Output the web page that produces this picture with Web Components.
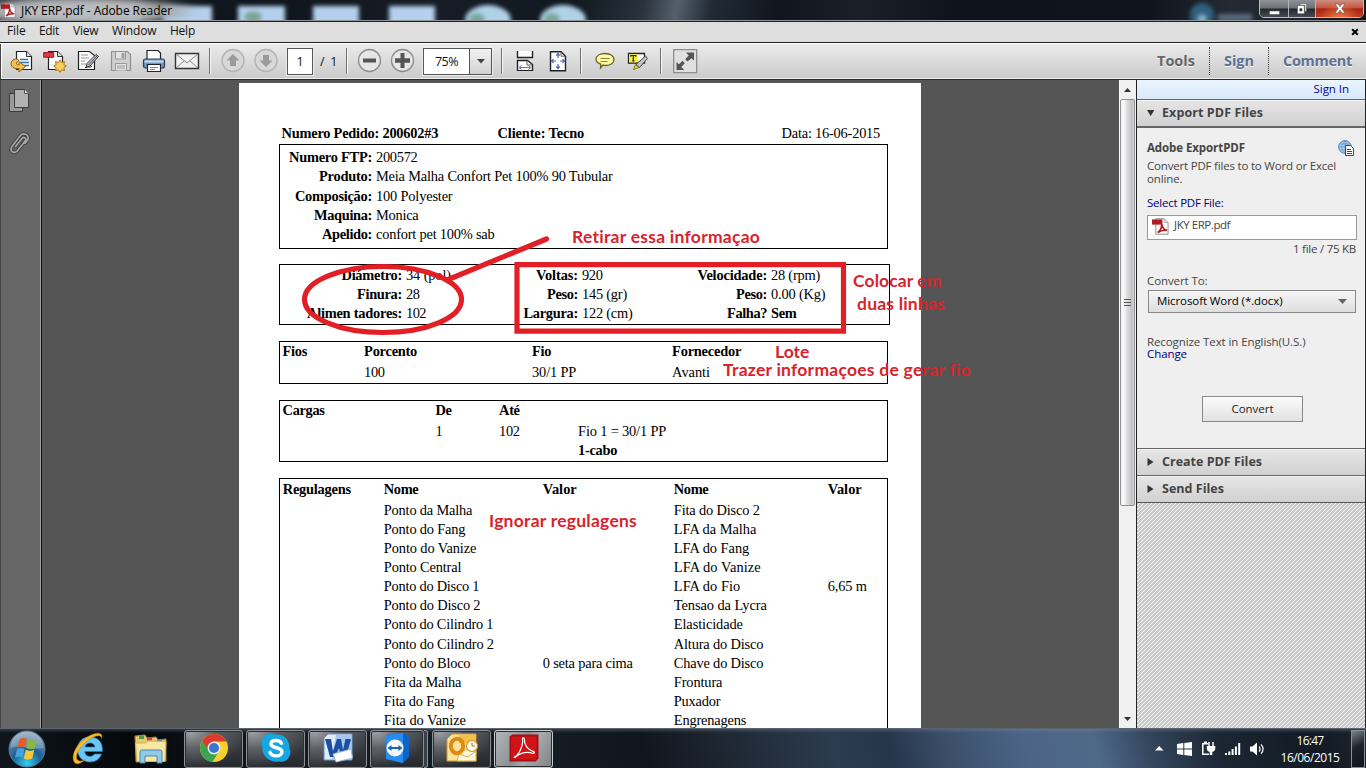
<!DOCTYPE html>
<html lang="en">
<head>
<meta charset="utf-8">
<title>JKY ERP.pdf - Adobe Reader</title>
<style>
html,body{margin:0;padding:0;width:1366px;height:768px;overflow:hidden;background:#555}
</style>
</head>
<body>
<reader-app></reader-app>
<script>
const define = (name, css, html, setup) => customElements.define(name, class extends HTMLElement {
  constructor() {
    super();
    const root = this.attachShadow({mode: 'open'});
    root.innerHTML = `<style>*{box-sizing:border-box}${css}</style>${typeof html === 'function' ? html(this) : html}`;
  }
  connectedCallback() { if (setup) setup(this); }
});

const pdfMark = (w, h) => `<svg width="${w}" height="${h}" viewBox="0 0 18 18">
<path d="M4 .8h9l4 4v12.4H4z" fill="#fdfdfd" stroke="#8a8a8a"/><path d="M13 .8v4h4" fill="#ddd" stroke="#999" stroke-width=".7"/>
<path d="M0 1.500h11v5.500H0z" fill="#b01c20"/><path d="M6 15.500c3-2 4.200-5 4.300-9 .8 4.500 2.800 6.200 5.700 6.600-4-.6-7 .4-10 2.400z" fill="none" stroke="#b01c20" stroke-width="1.700"/></svg>`;

/* ---------- window frame ---------- */
define('title-bar', `
:host{display:flex;height:21px;position:relative;overflow:hidden;font:12px "Open Sans",sans-serif;color:#000;
 background:linear-gradient(100deg,#10161d 0 20%,#161d26 32%,#101820 42%,#2a323b 47%,#54606d 49.5%,#222b36 52%,#10161d 57%,#1b2028 63%,#0e141b 70%,#0f151c 84%,#252b33 90%,#12181f 100%)}
svg.bg{position:absolute;inset:0}
.t{position:relative;display:flex;align-items:center;height:21px;padding-left:1px;gap:5px}
.t svg{flex:none}
.b{position:absolute;right:2px;top:-1px;height:19px;display:flex;border:1px solid #b9bec4;border-radius:0 0 5px 5px;overflow:hidden;background:#333}
.b div{display:flex;align-items:center;justify-content:center;background:linear-gradient(#8e9298,#6b7077 48%,#24292f 52%,#474c53)}
.b div+div{border-left:1px solid #b0b5ba}
.b .c{background:radial-gradient(ellipse at 50% 110%,#ee7a45,transparent 60%),linear-gradient(#d08d82,#c2553f 46%,#a52613 52%,#c23a1c)}
`, `<svg class="bg" width="1366" height="21"><defs><filter id="f" x="-30%" y="-80%" width="160%" height="260%"><feGaussianBlur stdDeviation="2.200"/></filter><filter id="g" x="-30%" y="-100%" width="160%" height="300%"><feGaussianBlur stdDeviation="9 5"/></filter></defs>
<g filter="url(#f)"><path d="M91 5h50v22H91z" fill="#7791ad"/><path d="M163 6h49v24h-49zM238 6h47v24h-47zM313 6h46v24h-46zM389 6h46v24h-46z" fill="#b4d0ee"/>
<ellipse cx="488" cy="20" rx="23" ry="15" fill="#b0d2e8"/><ellipse cx="563" cy="20" rx="23" ry="15" fill="#b0d2e8"/><ellipse cx="477" cy="19" rx="8" ry="6" fill="#75a997"/><ellipse cx="552" cy="19" rx="8" ry="6" fill="#75a997"/><ellipse cx="253" cy="17" rx="9" ry="6" fill="#78a68f"/>
<circle cx="1202" cy="15" r="12" fill="#2f617f"/><circle cx="1202" cy="19" r="4" fill="#85b8d5"/><path d="M1218 14h34v7h-34z" fill="#5b6b80"/></g>
<ellipse cx="85" cy="11" rx="103" ry="12" fill="#a3a7aa" filter="url(#g)"/><ellipse cx="75" cy="12" rx="85" ry="14" fill="#c4c6c7" opacity=".7" filter="url(#g)"/><path d="M0 20.500h1366" stroke="#8e9398"/></svg>
<div class="t">${pdfMark(15,17)}<t-x w="151">JKY ERP.pdf - Adobe Reader</t-x></div>
<div class="b"><div style="width:28px"><svg width="11" height="14"><path d="M.5 9h10v3.500H.5z" fill="#fff" stroke="#555" stroke-width=".6"/></svg></div><div style="width:27px"><svg width="12" height="13"><path d="M4 1.500h6.500v8H9V3H4z" fill="#fff" stroke="#444" stroke-width=".5"/><path d="M1.500 3.500h6.800v8.200H1.500zm2.300 3v2.600H6V6.500z" fill="#fff" fill-rule="evenodd" stroke="#444" stroke-width=".5"/></svg></div><div class="c" style="width:48px"><svg width="12" height="11"><path d="M1 1h3l2 2.700L8 1h3L7.700 5.400 11 10H8L6 7.200 4 10H1l3.300-4.600z" fill="#fff" stroke="#555" stroke-width=".6"/></svg></div></div>`);

define('menu-bar', `
:host{display:flex;height:21px;align-items:center;background:#dedede;border-top:1px solid #1d2126;padding-left:7px;font:12px "Open Sans",sans-serif;color:#111}
div{flex:none;line-height:18px;padding-bottom:2px}
svg{margin-left:auto;margin-right:7px}`,
`<div style="width:32px"><t-x w="18.500">File</t-x></div><div style="width:34px"><t-x w="20">Edit</t-x></div><div style="width:39px"><t-x w="25.500">View</t-x></div><div style="width:58px"><t-x w="44.500">Window</t-x></div><div><t-x w="25">Help</t-x></div>
<svg width="8" height="8"><path d="M1.200 1.200l5.600 5.600M6.800 1.200L1.200 6.800" stroke="#000" stroke-width="2"/></svg>`);

/* ---------- toolbar ---------- */
define('tool-cell', `:host{display:flex;flex:none;width:33px;height:33px;align-items:center;justify-content:center}`, `<slot></slot>`);
define('tool-sep', `:host{display:flex;flex:none;width:13px;justify-content:center}i{height:26px;width:2px;background:#707070;border-right:1px solid #f6f6f6}`, `<i></i>`);
define('tool-bar', `
:host{display:flex;height:38px;align-items:center;border-top:1px solid #222;border-bottom:1px solid #2b2b2b;box-shadow:inset 0 1px #fff,inset 1px 0 #444,inset 2px 0 #fff,inset 0 -1px #eee;
 background:linear-gradient(#ececec,#cacaca);padding-left:5px;font:12.500px "Open Sans",sans-serif;color:#111}
.page{flex:none;margin-left:5px;width:26px;height:27px;border:1px solid #555;background:#fff;box-shadow:0 0 0 1px #eee;text-align:center;line-height:25px}
.of{flex:none;width:20px;margin-left:7px;line-height:25px}
.zoom{flex:none;margin:0 3px 0 4px;width:69px;height:27px;border:1px solid #555;background:#fff;display:flex;box-shadow:0 0 0 1px #eee}
.zoom div:first-child{width:45px;padding-left:11px;line-height:25px}
.zoom div:last-child{flex:1;border-left:1px solid #555;background:linear-gradient(#f2f2f2,#d2d2d2);display:flex;align-items:center;justify-content:center}
.full{flex:none;margin-left:5px}
.tabs{margin-left:auto;display:flex;align-items:center;height:28px;font:bold 14.500px "Open Sans",sans-serif;color:#5b7294;text-shadow:0 1px #f4f4f4}
.tabs div{height:28px;line-height:27px;padding-left:14px}
.tabs div+div{border-left:1px dotted #333}`,
`<tool-cell><svg width="24" height="24" viewBox="0 0 24 24"><path d="M6.500 2.500h10l5 5v13h-15z" fill="#fff" stroke="#222" stroke-width="1.200"/><path d="M16.500 2.500v5h5" fill="#ddd" stroke="#333"/><path d="M10 10.500h8M9 13.500h10M12 16.500h7" stroke="#2d6fb0" stroke-width="1.500"/><path d="M7.500 10C2.500 9.500-.3 13.500 1.700 17c1.500 2.500 4 2.800 7.300 2.600V23l6.500-5.500L9 12.800v2.900C5.500 16 5.500 13 9 12z" fill="#f3c04e" stroke="#8a6414"/></svg></tool-cell>
<tool-cell><svg width="24" height="24" viewBox="0 0 24 24"><path d="M5.500 2.500h9l5 5v13h-14z" fill="#fafafa" stroke="#222" stroke-width="1.200"/><path d="M14.500 2.500v5h5" fill="#ddd" stroke="#333"/><path d="M.7 3.500h10v4.800H.7z" fill="#db3a45" stroke="#a01824"/><path d="M17 11l1.600 2.500 2.900-.8-.7 2.900 2.600 1.500-2.600 1.600.7 2.900-2.900-.7L17 23.400l-1.600-2.500-2.900.7.7-2.900-2.600-1.600 2.600-1.500-.7-2.900 2.900.8z" fill="#f8cd62" stroke="#a77817"/></svg></tool-cell>
<tool-cell><svg width="24" height="24" viewBox="0 0 24 24"><path d="M2.500 2.500h11l5 4v14h-16z" fill="#f9f9f9" stroke="#222" stroke-width="1.200"/><path d="M5 6h7M5 9h8M5 12h4M5 15h5" stroke="#999"/><path d="M11 14.500L20 5.500l2.500 2-8.500 9.500-4 1.500z" fill="#b8c7d9" stroke="#333"/><path d="M9 19c3-3 3 1 7-2" fill="none" stroke="#333"/><path d="M12.500 16L21 7" stroke="#555"/></svg></tool-cell>
<tool-cell><svg width="24" height="24" viewBox="0 0 24 24"><path d="M2.500 2.500h16l3 3v16h-19z" fill="#cfcfcf" stroke="#919191" stroke-width="1.200"/><path d="M6.500 3v7h10V3M6.500 21.500v-7h11v7" fill="#e3e3e3" stroke="#999"/><path d="M13 4.500h2v4h-2zM8 17h8M8 19h8" stroke="#999" fill="#aaa"/></svg></tool-cell>
<tool-cell><svg width="24" height="24" viewBox="0 0 24 24"><path d="M5 11V1.500h11L18.500 4v7z" fill="#fff" stroke="#222" stroke-width="1.200"/><rect x="1.500" y="10" width="21" height="9" rx="2" fill="#7196bb" stroke="#243f5e" stroke-width="1.200"/><path d="M2.500 12.500h19" stroke="#c7dcef" stroke-width="2"/><path d="M5.500 15.500h13v7h-13z" fill="#fff" stroke="#222" stroke-width="1.200"/><path d="M8 18.500h8M8 20.500h5" stroke="#888"/></svg></tool-cell>
<tool-cell><svg width="26" height="18" viewBox="0 0 26 18"><path d="M1.500 1.500h23v15h-23z" fill="#f0f0f0" stroke="#333" stroke-width="1.400"/><path d="M2 2l11 9 11-9M2 16l8-7M24 16l-8-7" fill="none" stroke="#888"/></svg></tool-cell>
<tool-sep></tool-sep>
<tool-cell><svg width="26" height="26" viewBox="0 0 26 26"><circle cx="13" cy="12.500" r="11" fill="#d8d8d8" stroke="#b2b2b2" stroke-width="1.300"/><path d="M13 6l6.500 6.500H16V18h-6v-5.500H6.500z" fill="#9b9b9b"/></svg></tool-cell>
<tool-cell><svg width="26" height="26" viewBox="0 0 26 26"><circle cx="13" cy="12.500" r="11" fill="#d8d8d8" stroke="#b2b2b2" stroke-width="1.300"/><path d="M13 19l6.500-6.500H16V7h-6v5.500H6.500z" fill="#9b9b9b"/></svg></tool-cell>
<div class="page">1</div><div class="of"><t-x w="17">/&nbsp; 1</t-x></div>
<tool-sep></tool-sep>
<tool-cell><svg width="26" height="26" viewBox="0 0 26 26"><circle cx="12.500" cy="12.500" r="11" fill="#e6e6e6" stroke="#8d8d8d" stroke-width="1.300"/><path d="M6 10.500h13v4H6z" fill="#555"/></svg></tool-cell>
<tool-cell><svg width="26" height="26" viewBox="0 0 26 26"><circle cx="12.500" cy="12.500" r="11" fill="#e6e6e6" stroke="#8d8d8d" stroke-width="1.300"/><path d="M5 10.200h5.500V5h4v5.200H20v4.600h-5.500V20h-4v-5.200H5z" fill="#555"/></svg></tool-cell>
<div class="zoom"><div><t-x w="23">75%</t-x></div><div><svg width="8" height="5"><path d="M0 0h8L4 4.500z" fill="#444"/></svg></div></div>
<tool-sep></tool-sep>
<tool-cell><svg width="20" height="22" viewBox="0 0 20 22"><path d="M2.500 1v6.500h15V1" fill="#fdfdfd" stroke="#222" stroke-width="1.400"/><path d="M2.500 21V10.500h10l5 4V21" fill="#fdfdfd" stroke="#222" stroke-width="1.400"/><path d="M2.500 20.500h15" stroke="#222"/><path d="M12 10.500v4.500h5" fill="none" stroke="#666"/><path d="M5 17.500h10M6.500 15.500l-2.500 2 2.500 2M13.500 15.500l2.500 2-2.500 2" fill="none" stroke="#6a74b5"/></svg></tool-cell>
<tool-cell><svg width="20" height="22" viewBox="0 0 20 22"><path d="M2.500 1.700h10.500l4.500 4.500v14.500h-15z" fill="#fdfdfd" stroke="#222" stroke-width="1.400"/><path d="M13 2v4.200h4" fill="none" stroke="#666"/><path d="M10 4v4M8.300 5.500L10 3.500l1.700 2M10 18v-4M8.300 16.500l1.700 2 1.700-2M4 11h4M5.500 9.300l-2 1.700 2 1.700M16 11h-4M14.500 9.300l2 1.700-2 1.700" fill="none" stroke="#5965b0" stroke-width="1.200"/></svg></tool-cell>
<tool-sep></tool-sep><span style="width:1px;flex:none"></span>
<tool-cell><svg width="22" height="20" viewBox="0 0 22 20"><path d="M11 2.500c5.500 0 9 2.500 9 6s-3.500 6-8 6c-1 0-2-.1-3-.4L6.500 17l.3-3.800C3.800 12 2 10.500 2 8.500c0-3.500 3.500-6 9-6z" fill="#fdfaa0" stroke="#6c6220" stroke-width="1.300"/><path d="M6.500 7.500h9M6.500 10.500h7" stroke="#888250" stroke-width="1.200"/></svg></tool-cell>
<tool-cell><svg width="22" height="20" viewBox="0 0 22 20"><path d="M1.500 2.500h16v9.500h-16z" fill="#fdfdf6" stroke="#222" stroke-width="1.300"/><path d="M2.200 3.200h8.300v8.200H2.200z" fill="#f6ee35"/><path d="M3.800 5.700V4.500h5v1.200M6.300 4.500v5.300M5.200 10h2.300" fill="none" stroke="#222" stroke-width="1.200"/><path d="M9 13.500l9.500-8.500 2 2.500-8 9z" fill="#c4c4c4" stroke="#444"/><path d="M8.500 13.500l3.300 3-5.300 2z" fill="#e8de3c" stroke="#7c7420"/></svg></tool-cell>
<tool-sep></tool-sep>
<svg class="full" width="25" height="25" style="margin-left:6px"><path d="M.7.7h23v23h-23z" fill="#e0e0e0" stroke="#8d8d8d" stroke-width="1.300"/><path d="M21 3.500v8l-2.500-2.300-4 3.300-2.300-2.300 3.500-3.700L13 3.500zM3.500 21v-8L6 15.300l3.500-3.500 2.300 2.500-3.500 3.700 3 3z" fill="#555"/></svg>
<div class="tabs"><div style="width:66px;color:#666"><t-x w="38">Tools</t-x></div><div style="width:59px"><t-x w="30">Sign</t-x></div><div style="width:98px"><t-x w="69">Comment</t-x></div></div>`);

/* ---------- document ---------- */
define('nav-rail', `:host{display:flex;flex-direction:column;align-items:center;gap:18px;width:42px;flex:none;background:#666;border-right:1px solid #111;box-shadow:inset -1px 0 #a0a0a0,inset 1px 0 #444;padding-top:9px;padding-right:3px}`,
`<svg width="22" height="24"><path d="M1.500 4.500h13v18h-13z" fill="#9a9a9a" stroke="#3d3d3d"/><path d="M6.500.5h10l4 4v14h-14z" fill="#b2b2b2" stroke="#3d3d3d"/><path d="M16.500.5v4h4" fill="#ddd" stroke="#555"/></svg>
<svg width="22" height="24" fill="none" stroke-linecap="round"><path stroke="#3a3a3a" stroke-width="3.400" d="M7.500 15.500l6.500-8c2-2.300 5 0 3.300 2.300L9.500 19.800c-3.300 3.700-8.700.2-5.700-4L12.500 4.500c2.500-3 8.500-1.500 7.500 3.500-.5 1.500-2 3-3 4.300"/><path stroke="#a9a9a9" stroke-width="1.700" d="M7.500 15.500l6.500-8c2-2.300 5 0 3.300 2.300L9.500 19.800c-3.300 3.700-8.700.2-5.700-4L12.500 4.500c2.500-3 8.500-1.500 7.500 3.500-.5 1.500-2 3-3 4.300"/></svg>`);

define('pdf-box', `:host{display:block;border:1px solid #000;background:#fff}`, `<slot></slot>`);
/* One line of the sheet: "cols" holds the track widths */
define('pdf-row', `:host{display:grid;height:19.1px;line-height:19px;white-space:nowrap}
:host([head]){font-weight:bold;margin-bottom:1.5px}
:host([pair]){column-gap:4px}
:host([pair]) ::slotted(b){text-align:right}`, `<slot></slot>`,
el => { el.style.gridTemplateColumns = el.getAttribute('cols'); });

const left = ['Ponto da Malha|88.5','Ponto do Fang|81.5','Ponto do Vanize|92.5','Ponto Central|77.5','Ponto do Disco 1|95.5','Ponto do Disco 2|96.5','Ponto do Cilindro 1|109.5','Ponto do Cilindro 2|110','Ponto do Bloco|86.5','Fita da Malha|77.5','Fita do Fang|70.5','Fita do Vanize|82'];
const right = ['Fita do Disco 2|86','LFA da Malha|82.5','LFA do Fang|75.5','LFA do Vanize|87','LFA do Fio|66.5','Tensao da Lycra|93','Elasticidade|69','Altura do Disco|89.5','Chave do Disco|89.5','Frontura|48.5','Puxador|46.5','Engrenagens|72.5'];
const fit = s => { const [t, w] = s.split('|'); return `<t-x w="${w}">${t}</t-x>`; };
const rcols = '101px 159px 131px 154px 1fr';

define('pdf-sheet', `
:host{display:block;flex:none;width:682px;height:645px;margin-left:197px;margin-top:3px;background:#fff;overflow:hidden;padding:40.500px 0 0 40px;font:14.400px "Liberation Serif",serif;color:#000}
pdf-row.top{height:20.500px;padding-left:2.600px}
pdf-box{width:609px}
.f pdf-row{height:19.200px}`,
`<pdf-row class="top" cols="216px 284px 1fr"><b><t-x w="156.500">Numero Pedido: 200602#3</t-x></b><b><t-x w="86.500">Cliente: Tecno</t-x></b><span><t-x w="98.500">Data: 16-06-2015</t-x></span></pdf-row>
<pdf-box class="f" style="height:105px;padding-top:3.300px">
${[['Numero FTP:|83','200572|41.5'],['Produto:|53','Meia Malha Confort Pet 100% 90 Tubular|236.5'],['Composição:|77','100 Polyester|76.5'],['Maquina:|58','Monica|42.5'],['Apelido:|50','confort pet 100% sab|118.5']].map(r => `<pdf-row pair cols="92px 1fr"><b>${fit(r[0])}</b><span>${fit(r[1])}</span></pdf-row>`).join('')}
</pdf-box>
<pdf-box style="width:611px;height:61px;margin-top:15px;padding-top:.7px">
${[['Diámetro:|60.5','34 (pol)|45','Voltas:|42','920|20.5','Velocidade:|69.5','28 (rpm)|49'],['Finura:|45','28|13.5','Peso:|31','145 (gr)|45','Peso:|31','0.00 (Kg)|54.5'],['Alimen tadores:|95','102|20','Largura:|54.5','122 (cm)|50.5','Falha?|40','<b>Sem</b>|25.5']].map(r => `<pdf-row pair cols="122px 94px 74px 111px 70px 1fr"><b>${fit(r[0])}</b><span>${fit(r[1])}</span><b>${fit(r[2])}</b><span>${fit(r[3])}</span><b>${fit(r[4])}</b><span>${fit(r[5])}</span></pdf-row>`).join('')}
</pdf-box>
<pdf-box style="height:43px;margin-top:16px;padding-left:2.600px">
<pdf-row head cols="81.500px 168px 140px 1fr">${fit('Fios|24.5')}${fit('Porcento|53')}${fit('Fio|19')}${fit('Fornecedor|69')}</pdf-row>
<pdf-row cols="81.500px 168px 140px 1fr"><span></span>${fit('100|20.5')}${fit('30/1 PP|44')}${fit('Avanti|38')}</pdf-row>
</pdf-box>
<pdf-box style="height:62px;margin-top:16px;padding-left:2.600px">
<pdf-row head cols="153px 63.500px 79px 1fr">${fit('Cargas|42')}${fit('De|16')}${fit('Até|20.5')}</pdf-row>
<pdf-row cols="153px 63.500px 79px 1fr"><span></span><span>1</span>${fit('102|20.5')}${fit('Fio 1 = 30/1 PP|88')}</pdf-row>
<pdf-row cols="153px 63.500px 79px 1fr"><span></span><span></span><span></span><b>${fit('1-cabo|39')}</b></pdf-row>
</pdf-box>
<pdf-box style="height:270px;margin-top:16px;padding:1.300px 0 0 2.800px">
<pdf-row head cols="${rcols}">${fit('Regulagens|68')}${fit('Nome|34.5')}${fit('Valor|34')}${fit('Nome|34.5')}${fit('Valor|34')}</pdf-row>
${left.map((l, i) => `<pdf-row cols="${rcols}"><span></span>${fit(l)}<span>${i === 8 ? fit('0 seta para cima|90') : ''}</span>${fit(right[i])}<span>${i === 4 ? fit('6,65 m|39') : ''}</span></pdf-row>`).join('')}
</pdf-box>`);

/* Red markup drawn freely over the sheet */
define('mark-up', `:host{position:absolute;inset:0;color:#d8232c;font:bold 17.500px/18px Lato,sans-serif;pointer-events:none}
svg,t-x{position:absolute}svg{left:0;top:0}`,
`<svg width="1077" height="648" fill="none" stroke="#e21f26" stroke-width="5.200"><ellipse cx="341" cy="219.500" rx="78.500" ry="33"/><path d="M405 200L504.500 159" stroke-linecap="round"/><path d="M475 184.700h326.500v66.500H475z"/></svg>
<t-x w="188.500" style="left:530px;top:148px">Retirar essa informaçao</t-x>
<t-x w="88.500" style="left:811px;top:192px">Colocar em</t-x>
<t-x w="88" style="left:815px;top:215px">duas linhas</t-x>
<t-x w="34.500" style="left:733px;top:263px">Lote</t-x>
<t-x w="247.500" style="left:681px;top:281px">Trazer informaçoes de gerar fio</t-x>
<t-x w="148" style="left:447px;top:432px">Ignorar regulagens</t-x>`);

define('scroll-bar', `:host{display:flex;flex-direction:column;align-items:center;width:17px;flex:none;background:#f0f0f0;box-shadow:inset 1px 0 #fafafa}
.a{height:19px;display:flex;align-items:center}
.th{width:15px;height:407px;border:1px solid #8f8f8f;border-radius:2px;background:linear-gradient(90deg,#f7f7f7 0 25%,#dfdfdf 45%,#bfc0c4 85%,#d9d9d9);display:flex;align-items:center;justify-content:center}
.e{flex:1}`,
`<div class="a"><svg width="7" height="4"><path d="M3.500 0L7 4H0z" fill="#333"/></svg></div><div class="th"><svg width="7" height="9"><path d="M0 1.500h7M0 4.500h7M0 7.500h7" stroke="#555"/></svg></div><div class="e"></div><div class="a"><svg width="7" height="4"><path d="M3.500 4L7 0H0z" fill="#333"/></svg></div>`);

/* ---------- side panel ---------- */
define('panel-head', `:host{display:flex;align-items:center;height:27px;border-top:1px solid #666;background:linear-gradient(#e6e6e6,#d1d1d1);box-shadow:inset 0 1px #f5f5f5;padding:0 0 1px 10px;gap:8px;font:bold 12.500px "Open Sans",sans-serif;color:#444}svg{flex:none}`,
el => `<svg width="7" height="8">${el.hasAttribute('open') ? '<path d="M0 1h7.500L3.700 7z" fill="#333"/>' : '<path d="M.5 0v8L6.500 4z" fill="#333"/>'}</svg><slot></slot>`);

define('tool-panel', `
:host{display:flex;flex-direction:column;width:230px;flex:none;background:#efefef;border-left:1px solid #222;border-right:1px solid #222;font:11.500px/14px "Open Sans",sans-serif;color:#444}
.in{height:19px;background:linear-gradient(#ebf5ff,#d7e8f8);color:#0000b0;text-align:right;padding:2px 16px 0 0}
.body{height:322px;border-top:2px solid #666;padding:12px 8px 0 10px;display:flex;flex-direction:column}
.row{display:flex;justify-content:space-between;height:19px}
.row b{line-height:15px}
.blue{color:#00007d}
.file{margin-top:5px;height:25px;width:210px;border:1px solid #999;background:#fff;display:flex;padding:2px 0 0 4px;gap:5px}
.cnt{text-align:right;margin-top:2px;padding-right:1px}
.sel{width:208px;height:23px;margin:2px 0 0 1px;border:1px solid #888;background:linear-gradient(#f5f5f5,#dedede);color:#000;display:flex;align-items:center;justify-content:space-between;padding:0 8px 1px}
.btn{width:101px;height:26px;border:1px solid #888;background:linear-gradient(#fbfbfb,#e2e2e2);color:#222;text-align:center;line-height:23px;margin:37px 0 0 55px}
.hatch{flex:1}
.lang{display:flex;flex-direction:column;align-items:flex-start;margin-top:23px;line-height:11.500px;height:23px}`,
`<div class="in"><t-x w="35.500">Sign In</t-x></div>
<panel-head open><t-x w="101">Export PDF Files</t-x></panel-head>
<div class="body">
<div class="row"><b><t-x w="98">Adobe ExportPDF</t-x></b><svg width="17" height="16" style="margin-right:2px"><circle cx="7" cy="7" r="6.300" fill="#b9d7f0" stroke="#3c78b4"/><path d="M7 1v12M1 7h12M2 4h10M2 10h10M7 1C3 4 3 10 7 13M7 1c4 3 4 9 0 12" fill="none" stroke="#5e96ca" stroke-width=".8"/><path d="M7.500 5.500h5l3 3v7h-8z" fill="#fff" stroke="#234f7e"/><path d="M9 9.500h4M9 11.500h5M9 13.500h5" stroke="#234f7e"/></svg></div>
<div style="line-height:13px"><t-x w="189">Convert PDF files to to Word or Excel</t-x><br><t-x w="35.500">online.</t-x></div>
<div class="blue" style="margin-top:11px"><t-x w="76.500">Select PDF File:</t-x></div>
<div class="file">${pdfMark(17,17)}<t-x w="56">JKY ERP.pdf</t-x></div>
<div class="cnt"><t-x w="63">1 file / 75 KB</t-x></div>
<div style="margin-top:18px"><t-x w="60.500">Convert To:</t-x></div>
<div class="sel"><t-x w="125.500">Microsoft Word (*.docx)</t-x><svg width="9" height="5"><path d="M0 0h9L4.500 5z" fill="#666"/></svg></div>
<div class="lang"><t-x w="158.500">Recognize Text in English(U.S.)</t-x><t-x w="40" class="blue">Change</t-x></div>
<div class="btn"><t-x w="42">Convert</t-x></div>
</div>
<panel-head><t-x w="100">Create PDF Files</t-x></panel-head><panel-head><t-x w="62">Send Files</t-x></panel-head>
<svg class="hatch" width="228" height="226"><defs><pattern id="h" width="4" height="4" patternUnits="userSpaceOnUse"><path d="M0 0h4v4H0z" fill="#c9c9c9"/><path d="M-1 1l2-2M0 4l4-4M3 5l2-2" stroke="#fafafa" stroke-width="1"/></pattern></defs><path d="M0 0h228v226H0z" fill="url(#h)"/><path d="M0 .5h228" stroke="#555"/></svg>`);

/* ---------- taskbar ---------- */
define('task-button', `:host{display:flex;align-items:center;justify-content:center;flex:none;width:59px;height:38px;margin-right:3px;border:1px solid #8d9196;border-radius:3px;box-shadow:inset 0 0 0 1px #2a2e33;padding-bottom:1px;
background:radial-gradient(ellipse at 10% 0,#a0a4a8 0,#5c6065 35%,transparent 75%),linear-gradient(#44484d,#24282d)}
:host([active]){background:linear-gradient(120deg,#b4b7b9,#8c9092 45%,#a8abad 60%,#7e8285);border-color:#c9cbcd}`, `<slot></slot>`);
define('task-bar', `
:host{display:flex;align-items:center;height:40px;border-top:1px solid #59646e;color:#fff;font:12px/17px "Open Sans",sans-serif;
background:linear-gradient(to bottom,rgba(120,140,160,.35),transparent 10%),linear-gradient(75deg,#10161c 0,#05080b 10%,#131a21 20%,#161c23 40%,#10161d 47%,#1c242e 52%,#232f3e 56%,#2c3b4f 61%,#26354a 65%,#3a4e69 69%,#4c6587 75%,#4f6989 80%,#33465d 84%,#1c2734 89%,#121a23 96%,#1d242c)}
svg{flex:none}
.clock{width:70px;text-align:center;margin-left:10px}
.show{width:14px;height:38px;border:1px solid #8a9096;background:linear-gradient(150deg,#79828a,#1b2229 45%,#10161c);margin-left:6px;margin-right:1px}`,
`<svg width="38" height="38" viewBox="0 0 38 38" style="margin-left:8px"><defs><radialGradient id="o" cx=".5" cy=".9" r=".9"><stop offset="0" stop-color="#2fd0f5"/><stop offset=".45" stop-color="#1b5f95"/><stop offset="1" stop-color="#8aa3b8"/></radialGradient></defs><circle cx="19" cy="19" r="18" fill="url(#o)" stroke="#56758c"/><path d="M2.500 18A16.500 16.500 0 0 1 35.500 18C25 21 13 14 2.500 18z" fill="#fff" opacity=".25"/><path d="M11.500 9c2.500-1.500 5.500-1.300 7.500 0l-2 8.500c-2.300-1.500-5-1.500-7.500 0z" fill="#ea5a27"/><path d="M20.300 9.700c2.500 1.500 5.500 1.500 8.700-.2l-2.200 8.800c-2.700 1.400-5.800 1.200-8.500-.2z" fill="#88b93c"/><path d="M9 19c2.400-1.400 5-1.400 7.500.1l-2 8.600c-2.200-1.400-5-1.300-7.500 0z" fill="#47a2dd"/><path d="M17.800 19.800c2.600 1.400 5.700 1.500 8.500 0l-2.100 8.700c-2.600 1.500-5.900 1.500-8.500.1z" fill="#fbc537"/></svg>
<svg width="34" height="34" viewBox="0 0 34 34" style="margin-left:26px"><path d="M17.500 5C10 5 5.500 10.500 5.500 17.500S10.500 30 18 30c5.500 0 9.700-2.700 11.500-8h-7c-2.500 4-9.500 3-9.700-2.500h17.500C31.300 10 26 5 17.500 5zM13 15c.5-5.500 9.500-5.500 10 0z" fill="#6cc6f4" stroke="#237ebc" stroke-width=".7" fill-rule="evenodd"/><path d="M3 31C-3 24 6 9 18 3.500c8-4 13.500-2.500 11.500 3 .1-4-5-3.500-10.500-.2C9.500 12 1.500 24 5.500 28c2 2 5 1 8-.5-4 3.300-8 5.500-10.500 3.500z" fill="#f7bd27" stroke="#b9790e" stroke-width=".5"/></svg>
<svg width="34" height="32" viewBox="0 0 34 32" style="margin:1px 16px 0 28px"><path d="M2 29L1 3l10-1 2 3 9-1 2 3 8-1v22z" fill="#e6c86f" stroke="#a28538"/><path d="M5 3h5v3H5z" fill="#4a9b45"/><path d="M13 4.500h5v3h-5z" fill="#c44"/><path d="M23 6.500h5v3h-5z" fill="#478ac9"/><path d="M1.500 10h10l3-2 17.500.5-1 20H3z" fill="#f8e79e" stroke="#cbb164"/><path d="M6 30V19q0-2 2-2h18q2 0 2 2v11h-5v-7H11v7z" fill="#8fcbe9" stroke="#4986ae"/></svg>
<task-button><svg width="30" height="30" viewBox="0 0 30 30"><circle cx="15" cy="15" r="14" fill="#f8cf2d"/><path d="M3 8A14 14 0 0 1 27.500 8.500H15l-6 9z" fill="#dc3a2c"/><path d="M3 8A14 14 0 0 0 13.500 29L20 18l-10.500-.5z" fill="#3aa450"/><circle cx="15" cy="15" r="6.500" fill="#f3f3f3"/><circle cx="15" cy="15" r="5.100" fill="#3a78d0"/></svg></task-button>
<task-button><svg width="30" height="30" viewBox="0 0 30 30"><path d="M9 .8A8.500 8.500 0 0 1 14 1.500c9-1 15 5.500 14.500 14 3 6-2 15-10.500 13C8 30 1 23 1.500 14.500-1 8 2.500 1.300 9 .8z" fill="#13a7e4"/><path d="M20.500 10.500c-1.500-4-10.500-4.200-10.500.5 0 5 11 2.500 11 8 0 5-10.500 5.200-12 .3" fill="none" stroke="#fff" stroke-width="3.400" stroke-linecap="round"/></svg></task-button>
<task-button><svg width="30" height="30" viewBox="0 0 30 30"><path d="M5 1h24v26H1V5z" fill="#e1ecf9" stroke="#6693ce"/><path d="M13 2h15v24H9z" fill="#a9c7ee"/><path d="M2 6h6l2 12 4-12h4l2 11 2.500-11H28l-5 18h-5l-2-9-4 9H7z" fill="#1b4fa4"/><path d="M10 21l18-5 1.500 9L13 29z" fill="#fff" stroke="#9db6d8"/></svg></task-button>
<task-button style="width:54px;margin-right:0"><svg width="28" height="32" viewBox="0 0 28 32"><path d="M3 3l17-2 6 3v21l-6 6-17-4z" fill="#0e63c9"/><path d="M3 3l17-2v30L3 27z" fill="#278dee"/><circle cx="12" cy="16" r="8.500" fill="#f7f7f7"/><path d="M4.500 16l4-3v2h7v-2l4 3-4 3v-2h-7v2z" fill="#1167b5"/></svg></task-button><span style="width:4px;height:38px;border:1px solid #8d9196;border-left:0;border-radius:0 3px 3px 0;margin-right:4px;flex:none;background:#3c4045;box-sizing:border-box"></span>
<task-button><svg width="32" height="30" viewBox="0 0 32 30"><path d="M6 1h24v27H1V6z" fill="#fbe39b" stroke="#d59a22"/><path d="M13 2h16v8H13z" fill="#f4bf48"/><path d="M14 18l16-3v13H11z" fill="#fff7dc" stroke="#dcae51"/><ellipse cx="11" cy="13" rx="6.200" ry="7.300" fill="none" stroke="#df8a12" stroke-width="4"/><circle cx="26" cy="13" r="5.500" fill="#fffdf2" stroke="#cf922c" stroke-width="1.200"/><path d="M26 9.500V13h3" fill="none" stroke="#b07a20"/><path d="M13 21l9 3 8-6" fill="none" stroke="#dcae51"/></svg></task-button>
<task-button active><svg width="30" height="28" viewBox="0 0 30 28"><path d="M.5 2.500l3-2h26v24l-3 3H.5z" fill="#a80e12"/><path d="M2 2.500h25.500v23H2z" fill="#cf1317"/><path d="M5.500 23C10 21 14.500 11 13.500 5c-.2-1.500 2-1.500 1.900.3-.5 5.200 3.600 11 9.100 12.300 1.800.6.500 2-1 1.700-5-1.700-11-.8-16.500 3.200-1 1-2.300 1.200-1.500.5z" fill="none" stroke="#fff" stroke-width="1.200"/></svg></task-button>
<svg width="9" height="5" style="margin-left:auto;margin-right:13px"><path d="M0 4.500h8.500L4.200 0z" fill="#fff"/></svg>
<svg width="15" height="14" style="margin-right:9px"><path d="M0 2l6.300-.9v5.400H0zM7.300 1L15 0v6.500H7.300zM0 7.500h6.300v5.400L0 12zM7.300 7.500H15V14l-7.700-1z" fill="#fff"/></svg>
<svg width="15" height="16" style="margin-right:9px"><path d="M7 2.800H1.800v10.400H8" fill="none" stroke="#fff" stroke-width="1.500"/><path d="M3 .5h3v2H3z" fill="#fff"/><path d="M8 1v4M12 1v4" stroke="#fff" stroke-width="1.500"/><path d="M5.800 5h8.500v2.500c0 2-1.500 3-3 3.300V14H8.700v-3.200c-1.700-.3-2.900-1.500-2.900-3.300z" fill="#fff"/></svg>
<svg width="16" height="12" style="margin-right:9px"><path d="M0 10h2v2H0zM3.300 8.500h2V12h-2zM6.600 6h2v6h-2zM9.900 3.500h2V12h-2zM13.200 0h2v12h-2z" fill="#fff"/></svg>
<svg width="15" height="14"><path d="M0 4.500h2.500L7 .5v13L2.500 9.500H0z" fill="#fff"/><path d="M9 4.500c1.300 1.500 1.300 3.500 0 5M11 2.300c2.600 3 2.600 6.500 0 9.400" fill="none" stroke="#fff" stroke-width="1.200"/></svg>
<div class="clock"><t-x w="27">16:47</t-x><br><t-x w="59">16/06/2015</t-x></div><div class="show"></div>`);

define('reader-app', `:host{display:flex;flex-direction:column;width:1366px;height:768px;overflow:hidden}
.main{display:flex;height:648px;flex:none}
.doc{position:relative;display:flex;width:1077px;flex:none;background:#555}`,
`<title-bar></title-bar><menu-bar></menu-bar><tool-bar></tool-bar>
<div class="main"><nav-rail></nav-rail><div class="doc"><pdf-sheet></pdf-sheet><mark-up></mark-up></div><scroll-bar></scroll-bar><tool-panel></tool-panel></div>
<task-bar></task-bar>`);

/* Text run whose tracking is set so that it spans "w" pixels */
define('t-x', `:host{display:inline-block;white-space:nowrap}`, `<span><slot></slot></span>`, el => {
  const w = parseFloat(el.getAttribute('w'));
  const r = document.createRange();
  r.selectNodeContents(el);
  const n = el.textContent.length;
  if (w && n > 1) el.style.letterSpacing = ((w - r.getBoundingClientRect().width) / n).toFixed(3) + 'px';
});
</script>
</body>
</html>
